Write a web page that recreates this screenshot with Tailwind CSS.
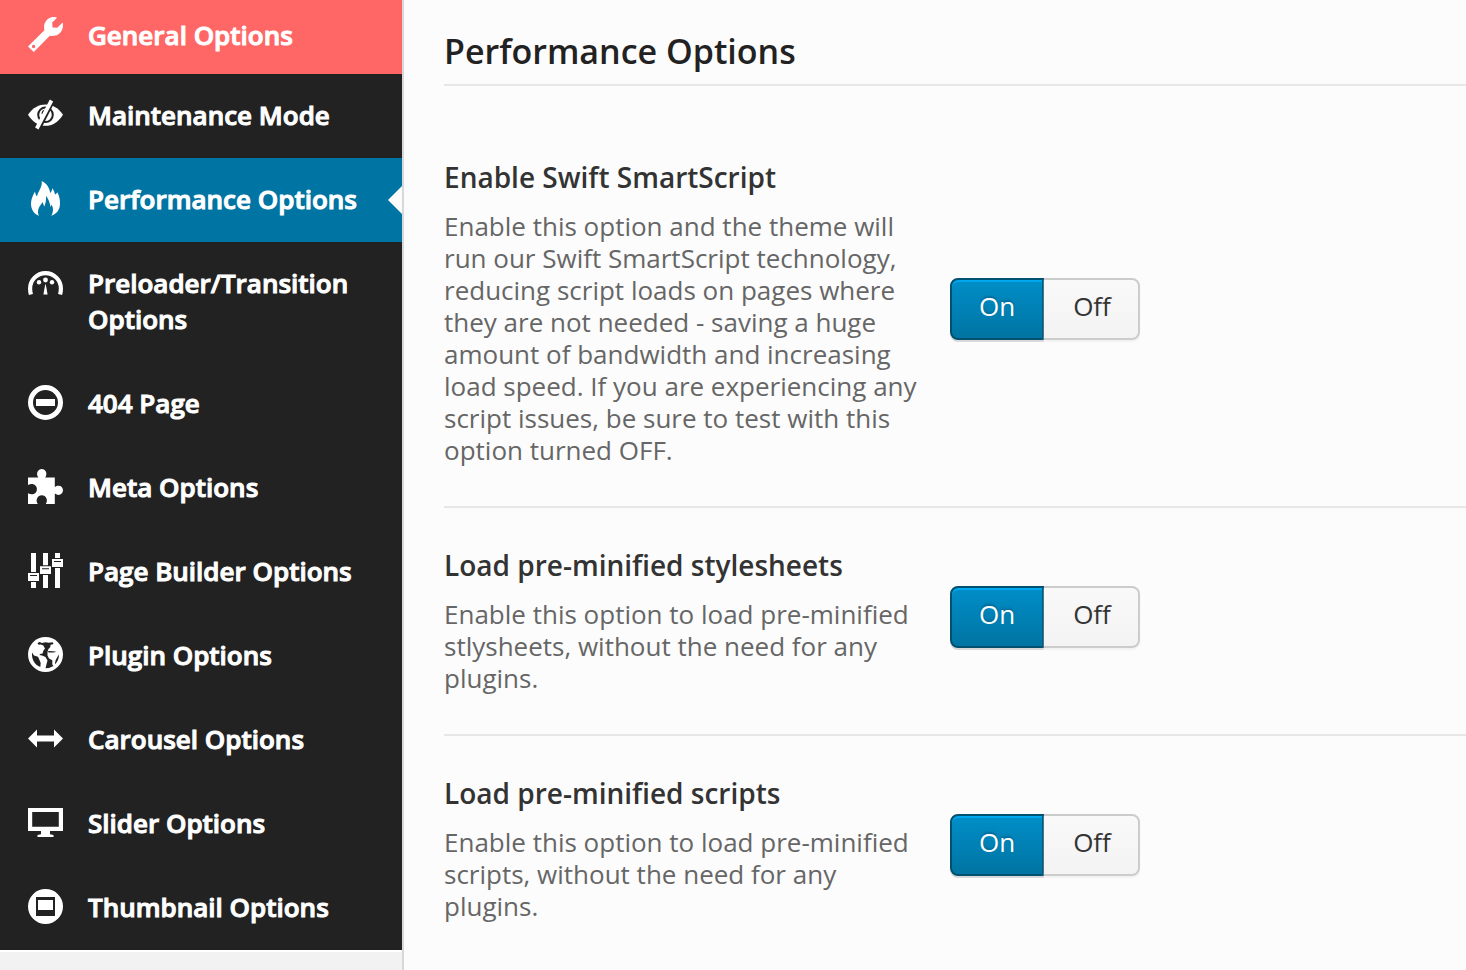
<!DOCTYPE html>
<html lang="en">
<head>
<meta charset="utf-8">
<meta name="viewport" content="width=device-width, initial-scale=1">
<title>Performance Options</title>
<script src="https://cdn.jsdelivr.net/npm/@tailwindcss/browser@4"></script>
</head>
<body class="flex min-h-screen items-stretch bg-[#fcfcfc] font-['Open_Sans',sans-serif]">

<aside class="w-[404px] shrink-0 border-r-2 border-[#d8d8d8] bg-[#f2f2f2]">
  <nav aria-label="Theme options" class="border-b-2 border-white bg-[#222222] text-[26px] leading-9 font-semibold text-white [-webkit-text-stroke:1px_#ffffff]">
    <a href="#general" class="flex items-start gap-[25px] bg-[#ff6666] pt-[17px] pr-4 pb-[21px] pl-7">
      <svg class="size-[35px] shrink-0" viewBox="0 0 35 35" fill="currentColor" aria-hidden="true"><path fill-rule="evenodd" d="M0 29.500 16.400 13.200C15 6.500 18.500 1 24.500 0 26.500-.2 28 .1 29 .8L24.200 5.600 24.500 10.500 29.200 10.800 34.700 5.400C36 12 32.500 17.300 27.500 18.600 25.300 19.200 23.300 19 21.800 18.700L5.800 35ZM5.600 27.800A1.700 1.700 0 1 0 5.600 31.200 1.700 1.700 0 1 0 5.600 27.800Z"/></svg>
      <span>General Options</span>
    </a>
    <a href="#maintenance" class="flex items-start gap-[25px] pt-[23px] pr-4 pb-[25px] pl-7">
      <svg class="size-[35px] shrink-0" viewBox="0 0 35 35" fill="currentColor" aria-hidden="true"><path d="M0 17.700C5 10.500 11 7.500 17.500 7.500S30 10.500 35 17.700C30 25.500 24 28.800 17.500 28.800S5 25.500 0 17.700Z"/><circle cx="17.500" cy="17.800" r="7.300" fill="none" stroke="#222222" stroke-width="2"/><path d="M14.500 17C14.500 15 16 13.800 17.500 13.600" fill="none" stroke="#222222" stroke-width="2"/><path d="M25.500 4 11.300 32" stroke="#222222" stroke-width="3"/><path d="M23.500 3.500 8.800 31.500" stroke="currentColor" stroke-width="3.800"/></svg>
      <span>Maintenance Mode</span>
    </a>
    <a href="#performance" aria-current="page" class="relative flex items-start gap-[25px] bg-[#0074a2] pt-[23px] pr-4 pb-[25px] pl-7">
      <svg class="size-[35px] shrink-0" viewBox="0 0 35 35" fill="currentColor" aria-hidden="true"><path d="M13.700 0C19 2.500 21.500 7 22.300 12 23.400 11 24 9.300 24.200 7.300 26 9.300 26.500 11.500 27 13.500 28 13.200 28.900 12.300 29.300 11.300 31.500 15 32 19 32 22.500 32 29 28.500 33 23.300 34.800 25.500 31 25.600 27 23.600 23.500L22.700 26.200C21.800 22 20.500 17.800 18 14.800 18.500 19 17.500 22 16.400 25.600 15.600 24 15 22.800 14.800 21 11 25.500 8.500 30 11 34.800 6 33 3 28.500 3 22.500 3 18 5 14 7 10.500 7.400 12.500 7.800 14.300 9 15.300 10.300 10 14.500 6 13.700 0Z"/></svg>
      <span>Performance Options</span>
      <span class="absolute inset-y-0 right-0 my-auto h-7 w-[14px] bg-[#fcfcfc] [clip-path:polygon(100%_0,0_50%,100%_100%)]"></span>
    </a>
    <a href="#preloader" class="flex items-start gap-[25px] pt-[23px] pr-4 pb-[25px] pl-7">
      <svg class="size-[35px] shrink-0" viewBox="0 0 35 35" fill="currentColor" aria-hidden="true"><path d="M2.900 29.500C2.300 27.500 2.100 25.500 2.100 23.500 2.100 15 9 8.100 17.500 8.100S32.900 15 32.900 23.500C32.900 25.500 32.700 27.500 32.100 29.500" fill="none" stroke="currentColor" stroke-width="4.200"/><circle cx="11" cy="17.200" r="2.200"/><circle cx="17.500" cy="15" r="2.400"/><circle cx="24" cy="17.200" r="2.200"/><path d="M17.200 19.500H17.800L19.600 29.500H15.400Z"/></svg>
      <span>Preloader/Transition Options</span>
    </a>
    <a href="#404" class="flex items-start gap-[25px] pt-[23px] pr-4 pb-[25px] pl-7">
      <svg class="size-[35px] shrink-0" viewBox="0 0 35 35" fill="currentColor" aria-hidden="true"><circle cx="17.500" cy="17.500" r="15" fill="none" stroke="currentColor" stroke-width="5"/><path d="M8 14H27V21H8Z"/></svg>
      <span>404 Page</span>
    </a>
    <a href="#meta" class="flex items-start gap-[25px] pt-[23px] pr-4 pb-[25px] pl-7">
      <svg class="size-[35px] shrink-0" viewBox="0 0 35 35" fill="currentColor" aria-hidden="true"><path d="M0 8.500H10.300C7.500 4.500 10 0 13.800 0S20 4.500 17.200 8.500H26.800V18C31 15 35 17.500 35 21.300S31 27.500 26.800 24.600V35H17.800C20.500 31 18 26.200 13.800 26.200S7 31 9.800 35H0V24.300C4.500 26.800 8.900 24.500 8.900 20.200S4.500 13.500 0 16Z"/></svg>
      <span>Meta Options</span>
    </a>
    <a href="#builder" class="flex items-start gap-[25px] pt-[23px] pr-4 pb-[25px] pl-7">
      <svg class="size-[35px] shrink-0" viewBox="0 0 35 35" fill="currentColor" aria-hidden="true"><path d="M3 0H8V19H3ZM3 29H8V35H3ZM12.500 0M15 0H20V12.300H15ZM15 22H20V35H15ZM27 0H32V5H27ZM27 15H32V35H27Z"/><path fill-rule="evenodd" d="M0 20H11V28H0ZM2 22V23H9V22ZM12 13.300H23V21H12ZM14 15.300V16.300H21V15.300ZM24 6H35V14H24ZM26 8V9H33V8Z"/></svg>
      <span>Page Builder Options</span>
    </a>
    <a href="#plugin" class="flex items-start gap-[25px] pt-[23px] pr-4 pb-[25px] pl-7">
      <svg class="size-[35px] shrink-0" viewBox="0 0 35 35" aria-hidden="true"><circle cx="17.500" cy="17.500" r="17.500" fill="currentColor"/><g fill="#222222"><path d="M9.500 6 11.500 5 14 6 17.500 5.200 21 5.700 24.500 5.300 25.500 6.300 24.500 7.400 22.500 7.800 22.300 10 20.300 12.200 19.500 15 19.500 18.500 21 21.500 24.300 23.300 24.300 27.500 25.500 29 21 31 17.500 31.300 18.300 28 19.500 23.500 17.500 20 14 18.500 11.500 18 12 17 14.500 16.500 15.500 13.500 17 11.500 15.300 8.500 13 7.500 10.500 7.800Z"/><path d="M4 15.500 6 18.500 10 19.800 11.500 23 12.700 26 12.300 30C7 28 3.500 23 4 15.500Z"/><path d="M20 14 25 14.300 28.500 14.800 25.500 15.400 20.500 15.600ZM31 17.500C31 22 29.300 25 26.800 27.500L27.500 23.500 29.500 19.800Z"/></g></svg>
      <span>Plugin Options</span>
    </a>
    <a href="#carousel" class="flex items-start gap-[25px] pt-[23px] pr-4 pb-[25px] pl-7">
      <svg class="size-[35px] shrink-0" viewBox="0 0 35 35" fill="currentColor" aria-hidden="true"><path d="M0 17.500 9 8.500V14.600H26V8.500L35 17.500 26 26.500V20.400H9V26.500Z"/></svg>
      <span>Carousel Options</span>
    </a>
    <a href="#slider" class="flex items-start gap-[25px] pt-[23px] pr-4 pb-[25px] pl-7">
      <svg class="size-[35px] shrink-0" viewBox="0 0 35 35" fill="currentColor" aria-hidden="true"><path fill-rule="evenodd" d="M0 3H35V26H22V29.200L25.500 30V32H9.500V30L13 29.200V26H0ZM4.200 7V21.800H30.800V7Z"/></svg>
      <span>Slider Options</span>
    </a>
    <a href="#thumbnail" class="flex items-start gap-[25px] pt-[23px] pr-4 pb-[25px] pl-7">
      <svg class="size-[35px] shrink-0" viewBox="0 0 35 35" fill="currentColor" aria-hidden="true"><path fill-rule="evenodd" d="M17.500 0A17.500 17.500 0 1 1 17.500 35 17.500 17.500 0 1 1 17.500 0ZM8 8V27H27V8ZM10 11H25V21H10Z"/></svg>
      <span>Thumbnail Options</span>
    </a>
  </nav>
</aside>

<main class="min-w-0 flex-1 pl-10">
  <h1 class="border-b-2 border-[#e7e7e7] pt-[27px] pb-[9px] text-[34px] leading-[48px] font-semibold text-[#222222]">Performance Options</h1>

  <form>
    <fieldset class="flex items-center gap-8 border-b-2 border-[#e7e7e7] pt-[73px] pb-10">
      <div class="w-[474px] shrink-0">
        <h2 id="smart" class="text-[28px] leading-9 font-semibold text-[#333333]">Enable Swift SmartScript</h2>
        <p class="pt-[15px] text-[26px] leading-8 text-[#666666]">Enable this option and the theme will run our Swift SmartScript technology, reducing script loads on pages where they are not needed - saving a huge amount of bandwidth and increasing load speed. If you are experiencing any script issues, be sure to test with this option turned OFF.</p>
      </div>
      <div role="radiogroup" aria-labelledby="smart" class="mb-[7px] flex h-[62px] text-[26px] leading-9">
        <label class="relative flex w-[94px] justify-center rounded-l-lg border-2 border-[#cccccc] bg-[#f5f5f5] pt-2 text-[#333333] has-checked:border-[#00506f] has-checked:bg-linear-to-b has-checked:from-[#008ec8] has-checked:to-[#0074a2] has-checked:text-white has-checked:shadow-[inset_0_2px_0_#00a8ef,0_2px_0_#d9d9d9] has-checked:text-shadow-[0_-2px_2px_#006a95]"><input type="radio" name="smart" checked class="absolute inset-0 appearance-none">On</label>
        <label class="relative flex w-24 justify-center rounded-r-lg border-2 border-l-0 border-[#cccccc] bg-linear-to-b from-[#f9f9f9] to-[#f3f3f3] pt-2 pl-[2px] text-[#333333] shadow-[0_2px_2px_#f2f2f2]"><input type="radio" name="smart" class="absolute inset-0 appearance-none">Off</label>
      </div>
    </fieldset>

    <fieldset class="flex items-center gap-8 border-b-2 border-[#e7e7e7] pt-[39px] pb-10">
      <div class="w-[474px] shrink-0">
        <h2 id="styles" class="text-[28px] leading-9 font-semibold text-[#333333]">Load pre-minified stylesheets</h2>
        <p class="pt-[15px] text-[26px] leading-8 text-[#666666]">Enable this option to load pre-minified stlysheets, without the need for any plugins.</p>
      </div>
      <div role="radiogroup" aria-labelledby="styles" class="mb-[7px] flex h-[62px] text-[26px] leading-9">
        <label class="relative flex w-[94px] justify-center rounded-l-lg border-2 border-[#cccccc] bg-[#f5f5f5] pt-2 text-[#333333] has-checked:border-[#00506f] has-checked:bg-linear-to-b has-checked:from-[#008ec8] has-checked:to-[#0074a2] has-checked:text-white has-checked:shadow-[inset_0_2px_0_#00a8ef,0_2px_0_#d9d9d9] has-checked:text-shadow-[0_-2px_2px_#006a95]"><input type="radio" name="styles" checked class="absolute inset-0 appearance-none">On</label>
        <label class="relative flex w-24 justify-center rounded-r-lg border-2 border-l-0 border-[#cccccc] bg-linear-to-b from-[#f9f9f9] to-[#f3f3f3] pt-2 pl-[2px] text-[#333333] shadow-[0_2px_2px_#f2f2f2]"><input type="radio" name="styles" class="absolute inset-0 appearance-none">Off</label>
      </div>
    </fieldset>

    <fieldset class="flex items-center gap-8 pt-[39px] pb-10">
      <div class="w-[474px] shrink-0">
        <h2 id="scripts" class="text-[28px] leading-9 font-semibold text-[#333333]">Load pre-minified scripts</h2>
        <p class="pt-[15px] text-[26px] leading-8 text-[#666666]">Enable this option to load pre-minified scripts, without the need for any plugins.</p>
      </div>
      <div role="radiogroup" aria-labelledby="scripts" class="mb-[7px] flex h-[62px] text-[26px] leading-9">
        <label class="relative flex w-[94px] justify-center rounded-l-lg border-2 border-[#cccccc] bg-[#f5f5f5] pt-2 text-[#333333] has-checked:border-[#00506f] has-checked:bg-linear-to-b has-checked:from-[#008ec8] has-checked:to-[#0074a2] has-checked:text-white has-checked:shadow-[inset_0_2px_0_#00a8ef,0_2px_0_#d9d9d9] has-checked:text-shadow-[0_-2px_2px_#006a95]"><input type="radio" name="scripts" checked class="absolute inset-0 appearance-none">On</label>
        <label class="relative flex w-24 justify-center rounded-r-lg border-2 border-l-0 border-[#cccccc] bg-linear-to-b from-[#f9f9f9] to-[#f3f3f3] pt-2 pl-[2px] text-[#333333] shadow-[0_2px_2px_#f2f2f2]"><input type="radio" name="scripts" class="absolute inset-0 appearance-none">Off</label>
      </div>
    </fieldset>
  </form>
</main>

</body>
</html>
